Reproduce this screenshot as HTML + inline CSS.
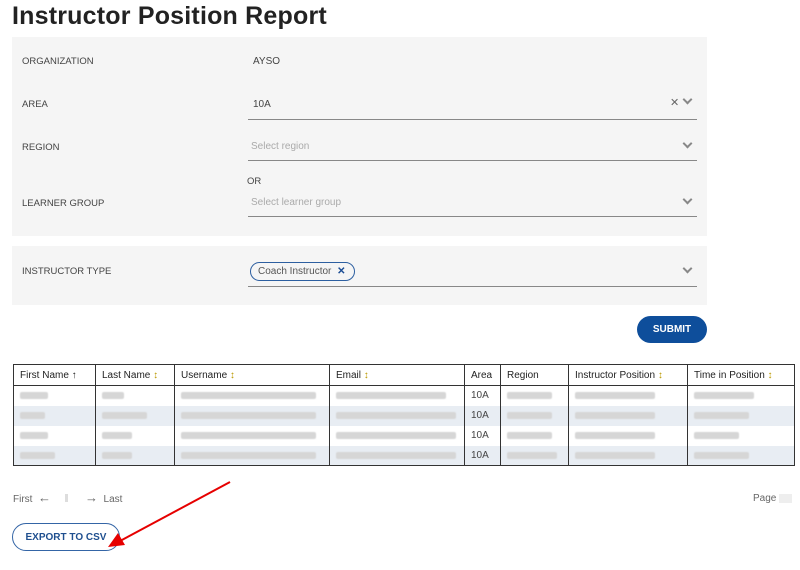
<!DOCTYPE html>
<html><head><style>
*{margin:0;padding:0;box-sizing:border-box}
body{width:800px;height:570px;background:#fff;font-family:"Liberation Sans",sans-serif;position:relative;overflow:hidden;color:#333}
.abs{position:absolute}
h1{position:absolute;left:12px;top:2px;font-size:25px;font-weight:bold;color:#222;letter-spacing:0.2px}
.panel{position:absolute;left:12px;width:695px;background:#f5f5f5}
.lbl{position:absolute;left:22px;font-size:9.5px;color:#444}
.val{position:absolute;left:253px;font-size:10px;color:#444}
.ph{position:absolute;left:251px;font-size:10px;color:#aaa}
.ul{position:absolute;left:248px;width:449px;height:1px;background:#888}
.chev{position:absolute;left:684px;width:7px;height:7px;border-right:2px solid #888;border-bottom:2px solid #888;transform:rotate(45deg)}
table{position:absolute;left:13px;top:364px;width:782px;border-collapse:collapse;font-size:10px}
th{font-weight:normal;text-align:left;padding:0 6px;height:21px;border:1px solid #333;color:#222}
td{height:20px;padding:0 6px;border-left:1px solid #333;border-right:1px solid #333;color:#444}
tr.s td{background:#e8edf3}
table{border:1px solid #333}
.b{display:inline-block;height:7px;background:#d6d6d6;border-radius:2px;vertical-align:middle;filter:blur(0.6px)}
.btn{position:absolute;border-radius:14px;font-weight:bold;font-size:10px;text-align:center}
</style></head><body>
<h1>Instructor Position Report</h1>
<div class="panel" style="top:37px;height:199px"></div>
<div class="panel" style="top:246px;height:59px"></div>
<div class="lbl" style="top:56px">ORGANIZATION</div><div class="val" style="top:56px">AYSO</div>
<div class="lbl" style="top:99px">AREA</div><div class="val" style="top:99px">10A</div>
<div class="abs" style="left:670px;top:96px;font-size:11px;color:#666">✕</div>
<div class="chev" style="top:96px"></div><div class="ul" style="top:119px"></div>
<div class="lbl" style="top:142px">REGION</div><div class="ph" style="top:141px">Select region</div>
<div class="chev" style="top:140px"></div><div class="ul" style="top:160px"></div>
<div class="abs" style="left:247px;top:176px;font-size:9.5px;color:#444">OR</div>
<div class="lbl" style="top:198px">LEARNER GROUP</div><div class="ph" style="top:197px">Select learner group</div>
<div class="chev" style="top:196px"></div><div class="ul" style="top:216px"></div>
<div class="lbl" style="top:266px">INSTRUCTOR TYPE</div>
<div class="abs" style="left:250px;top:262px;width:105px;height:19px;border:1px solid #2d5fa0;border-radius:10px;font-size:10px;color:#555;padding:3px 0 0 7px">Coach Instructor <b style="color:#1a4c94;margin-left:3px">✕</b></div>
<div class="chev" style="top:265px"></div><div class="ul" style="top:286px"></div>
<div class="btn" style="left:637px;top:316px;width:70px;height:27px;background:#0e4e9b;color:#fff;padding-top:8px">SUBMIT</div>
<table>
<tr><th style="width:82px">First Name <b>↑</b></th><th style="width:79px">Last Name <span style="color:#b90">↕</span></th><th style="width:155px">Username <span style="color:#b90">↕</span></th><th style="width:135px">Email <span style="color:#b90">↕</span></th><th style="width:36px">Area</th><th style="width:68px">Region</th><th style="width:119px">Instructor Position <span style="color:#b90">↕</span></th><th>Time in Position <span style="color:#b90">↕</span></th></tr>
<tr><td><span class="b" style="width:28px"></span></td><td><span class="b" style="width:22px"></span></td><td><span class="b" style="width:135px"></span></td><td><span class="b" style="width:110px"></span></td><td>10A</td><td><span class="b" style="width:45px"></span></td><td><span class="b" style="width:80px"></span></td><td><span class="b" style="width:60px"></span></td></tr>
<tr class="s"><td><span class="b" style="width:25px"></span></td><td><span class="b" style="width:45px"></span></td><td><span class="b" style="width:135px"></span></td><td><span class="b" style="width:120px"></span></td><td>10A</td><td><span class="b" style="width:45px"></span></td><td><span class="b" style="width:80px"></span></td><td><span class="b" style="width:55px"></span></td></tr>
<tr><td><span class="b" style="width:28px"></span></td><td><span class="b" style="width:30px"></span></td><td><span class="b" style="width:135px"></span></td><td><span class="b" style="width:120px"></span></td><td>10A</td><td><span class="b" style="width:45px"></span></td><td><span class="b" style="width:80px"></span></td><td><span class="b" style="width:45px"></span></td></tr>
<tr class="s"><td><span class="b" style="width:35px"></span></td><td><span class="b" style="width:30px"></span></td><td><span class="b" style="width:135px"></span></td><td><span class="b" style="width:120px"></span></td><td>10A</td><td><span class="b" style="width:50px"></span></td><td><span class="b" style="width:80px"></span></td><td><span class="b" style="width:55px"></span></td></tr>
</table>
<div class="abs" style="left:13px;top:490px;font-size:10px;color:#666">First &nbsp;<span style="font-size:13px">←</span><span style="display:inline-block;width:3px;height:8px;background:#ddd;margin:0 17px 0 14px"></span><span style="font-size:13px">→</span>&nbsp; Last</div>
<div class="abs" style="left:753px;top:493px;font-size:10px;color:#666">Page <span style="display:inline-block;width:13px;height:9px;background:#eee;vertical-align:middle"></span></div>
<div class="btn" style="left:12px;top:523px;width:108px;height:28px;border:1px solid #3465a6;color:#1f4f8f;padding-top:8px">EXPORT TO CSV</div>
<svg class="abs" style="left:0;top:0" width="800" height="570"><line x1="230" y1="482" x2="120" y2="541" stroke="#e60000" stroke-width="2"/><polygon points="108,547 118,533 125,545" fill="#e60000"/></svg>
</body></html>
